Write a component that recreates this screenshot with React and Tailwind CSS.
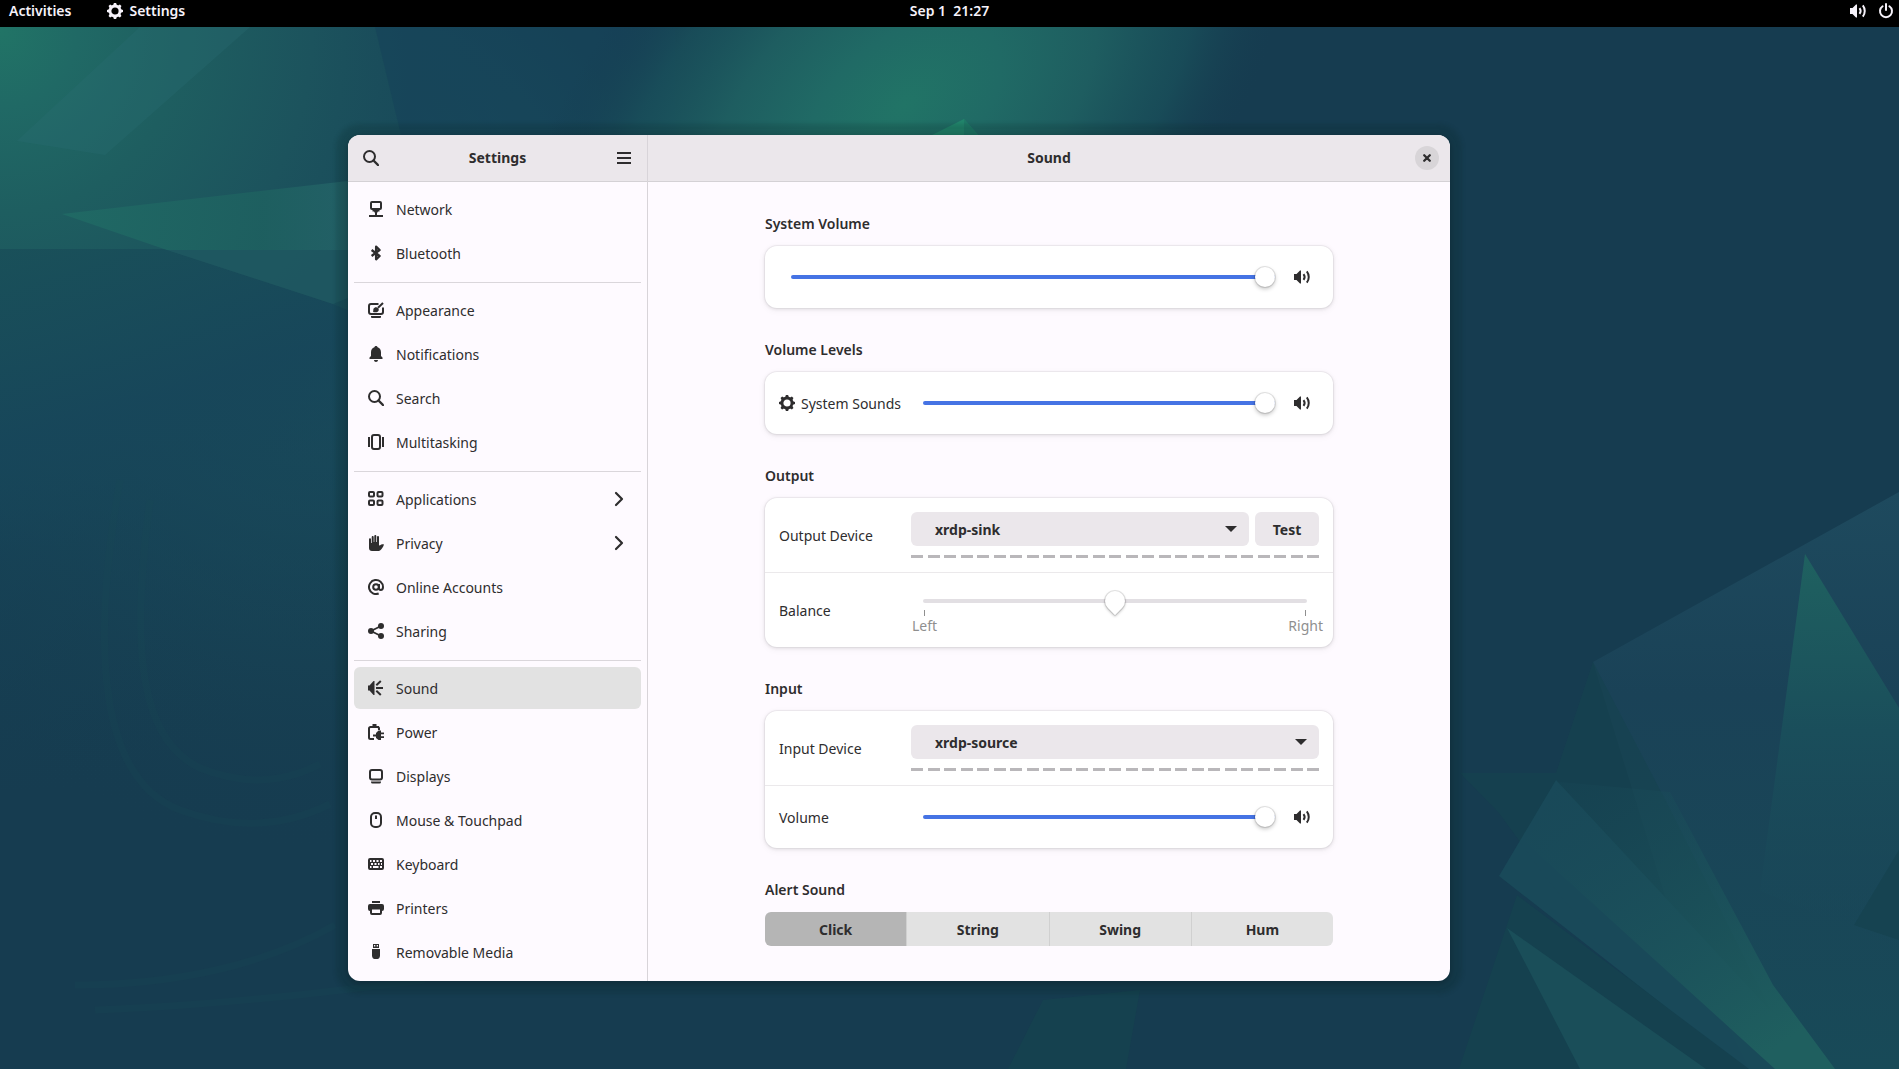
import { useState } from "react";

/* ---------- icons, drawn on a 16px grid ---------- */

function Icon({ children, className = "size-4", label }) {
  return (
    <svg
      viewBox="0 0 16 16"
      className={`shrink-0 ${className}`}
      fill="currentColor"
      role={label ? "img" : undefined}
      aria-label={label}
      aria-hidden={label ? undefined : true}
    >
      {children}
    </svg>
  );
}

const line = { fill: "none", stroke: "currentColor", strokeWidth: 2 };

const SearchIcon = () => (
  <Icon>
    <circle cx="6.5" cy="6.5" r="5.5" {...line} />
    <path d="M10.5 10.5 15 15" {...line} strokeWidth="2.4" strokeLinecap="round" />
  </Icon>
);

const MenuIcon = () => (
  <Icon>
    <path d="M1 2h14v2H1zM1 7h14v2H1zM1 12h14v2H1z" />
  </Icon>
);

const CloseIcon = () => (
  <Icon>
    <path d="m5.200 5.200 5.600 5.600M10.800 5.200l-5.600 5.600" {...line} strokeWidth="2.300" strokeLinecap="round" />
  </Icon>
);

const ChevronIcon = () => (
  <Icon>
    <path d="m5 2 6 6-6 6" {...line} strokeWidth="2.2" strokeLinecap="round" strokeLinejoin="round" />
  </Icon>
);

const GearIcon = () => (
  <Icon>
    <circle cx="8" cy="8" r="5" {...line} strokeWidth="2.800" />
    {[0, 45, 90, 135, 180, 225, 270, 315].map((a) => (
      <path key={a} d="M6 2.800 6.900 0h2.200l.9 2.800z" transform={`rotate(${a} 8 8)`} />
    ))}
  </Icon>
);

const VolumeIcon = () => (
  <Icon>
    <path d="M0 5h2.5L6 1.5h1v13H6L2.500 11H0z" />
    <path d="M9.500 5.200c1.300 1.600 1.300 4 0 5.600" {...line} />
    <path d="M12.800 2.300c2.600 3.300 2.600 8.100 0 11.400" {...line} />
  </Icon>
);

const PowerOffIcon = () => (
  <Icon>
    <path d="M4.600 3.200a6 6 0 1 0 6.800 0" {...line} strokeLinecap="round" />
    <path d="M8 1v6" {...line} strokeLinecap="round" />
  </Icon>
);

const NetworkIcon = () => (
  <Icon>
    <rect x="3" y="1" width="10" height="7" rx="1" {...line} />
    <path d="M4.500 8.500h7v2H10L9 12v2H7v-2l-1-1.500H4.500zM1 14h14v2H1z" />
  </Icon>
);

const BluetoothIcon = () => (
  <Icon>
    <path d="m3.600 5 8 6-3.500 3.300V1.700L11.600 5l-8 6" {...line} strokeWidth="2.300" strokeLinejoin="round" />
  </Icon>
);

const AppearanceIcon = () => (
  <Icon>
    <path d="M10.500 2H3a2 2 0 0 0-2 2v6a2 2 0 0 0 2 2h10a2 2 0 0 0 2-2V5.500" {...line} />
    <path d="M3 14h10v1a1 1 0 0 1-1 1H4a1 1 0 0 1-1-1z" />
    <path d="M5 10c.6-.8 0-2 .5-3.200.8-1.800 3.300-2.200 4.600-.8 1.200 1.400.8 3.300-.8 4-1.200.5-2.700.2-4.300 0z" />
    <path d="m10 5.800 5-4.800" {...line} />
  </Icon>
);

const BellIcon = () => (
  <Icon>
    <path d="M8 0c-.9 0-1.500.6-1.600 1.300C4.300 2 3 3.900 3 6.200V10l-1.500 1.600V13h13v-1.400L13 10V6.200c0-2.300-1.300-4.200-3.400-4.900C9.500.6 8.900 0 8 0zM6 14h4c0 1.100-.9 2-2 2s-2-.9-2-2z" />
  </Icon>
);

const MultitaskingIcon = () => (
  <Icon>
    <rect x="4" y="1" width="8" height="14" rx="2" {...line} />
    <path d="M0 3h2v10H0zM14 3h2v10h-2z" />
  </Icon>
);

const AppsIcon = () => (
  <Icon>
    <g {...line}>
      <rect x="1" y="1" width="5" height="4.500" rx="1" />
      <rect x="9.500" y="1" width="5" height="4.500" rx="1" />
      <rect x="1" y="9.500" width="5" height="4.500" rx="1" />
      <rect x="9.500" y="9.500" width="5" height="4.500" rx="1" />
    </g>
  </Icon>
);

const HandIcon = () => (
  <Icon>
    <path d="M1 4.300C1 2.800 3 2.800 3 4.300V8h.7V2.200c0-1.500 2-1.500 2 0V7h.6V1.100c0-1.500 2-1.500 2 0V7h.7V2.200c0-1.500 2-1.500 2 0v8.300l1.200-.2c1-1.200 2.300-1.500 3.800-.7-.8 2.600-2 4.400-4 5.800-.8.500-1.500.6-2.400.6H4c-1.900 0-3-1.300-3-3z" />
  </Icon>
);

const AtIcon = () => (
  <Icon>
    <circle cx="8" cy="8" r="2.800" {...line} />
    <path d="M11 5v4c0 1.300.8 1.900 1.700 1.900 1.300 0 2.300-1.100 2.300-2.900a7 7 0 1 0-4.300 6.500" {...line} />
  </Icon>
);

const ShareIcon = () => (
  <Icon>
    <circle cx="3" cy="8" r="3" />
    <circle cx="13" cy="3" r="3" />
    <circle cx="13" cy="13" r="3" />
    <path d="M13 3 3 8l10 5" {...line} strokeWidth="1.800" />
  </Icon>
);

const SoundIcon = () => (
  <Icon>
    <path d="M0 5.500h1.500L5.500 1h1v14h-1l-4-4.500H0z" />
    <path d="M8 8h7M8.300 5.300 12.800 1M8.300 10.700l4.500 4.300" {...line} />
  </Icon>
);

const BatteryIcon = () => (
  <Icon>
    <path d="M4.500 0h4v2H11v2H2V2h2.500z" />
    <path d="M11 6V4.500A1.500 1.500 0 0 0 9.500 3h-7A1.500 1.500 0 0 0 1 4.500v9A1.500 1.500 0 0 0 2.500 15H6" {...line} />
    <path d="M13 6.500v2h3v1.800h-3v2h3v1.700h-3v2h-2.500L8 14v-1.500H5v-2h3V9l2.500-2.500z" />
  </Icon>
);

const DisplayIcon = () => (
  <Icon>
    <rect x="2" y="2" width="12" height="9.500" rx="2" {...line} />
    <path d="M3 13.500h10v.5a1.500 1.500 0 0 1-1.500 1.500h-7A1.500 1.500 0 0 1 3 14z" />
  </Icon>
);

const MouseIcon = () => (
  <Icon>
    <rect x="3" y="1" width="10" height="14" rx="4" {...line} />
    <path d="M7 3.500h2V7H7z" />
  </Icon>
);

const KeyboardIcon = () => (
  <Icon>
    <path
      fillRule="evenodd"
      d="M2 2h12a2 2 0 0 1 2 2v8a2 2 0 0 1-2 2H2a2 2 0 0 1-2-2V4a2 2 0 0 1 2-2zM2 4v2h1.500V4zM5 4v2h2V4zM8.500 4v2h2V4zM12 4v2h2V4zM3 7v2h2V7zM6.500 7v2h2V7zM10 7v2h1.500V7zM13 7v2h1V7zM2 10v2h1.500v-2zM5 10v2h5.500v-2zM12 10v2h2v-2z"
    />
  </Icon>
);

const PrinterIcon = () => (
  <Icon>
    <path d="M4 1h8v2H4z" />
    <path
      fillRule="evenodd"
      d="M2 4h12a2 2 0 0 1 2 2v3a2 2 0 0 1-2 2v2a2 2 0 0 1-2 2H4a2 2 0 0 1-2-2v-2a2 2 0 0 1-2-2V6a2 2 0 0 1 2-2zM4 9.500V13h8V9.500z"
    />
  </Icon>
);

const UsbIcon = () => (
  <Icon>
    <path fillRule="evenodd" d="M5 0h6v4H5zM6 1v1.500h1.300V1zM8.700 1v1.500H10V1z" />
    <path d="M4 5h8v6.500C12 14 10.500 15 9.500 15h-3C5.500 15 4 14 4 11.500z" />
  </Icon>
);

/* ---------- wallpaper ---------- */

function Wallpaper() {
  return (
    <svg
      className="absolute inset-0 size-full"
      viewBox="0 0 1899 1069"
      preserveAspectRatio="xMidYMid slice"
      aria-hidden="true"
    >
      <defs>
        <radialGradient id="glowLeft" gradientUnits="userSpaceOnUse" cx="0" cy="30" r="520">
          <stop offset="0" stopColor="#217466" />
          <stop offset="0.150" stopColor="#206965" />
          <stop offset="0.350" stopColor="#1e5e60" />
          <stop offset="0.600" stopColor="#1c535d" />
          <stop offset="0.800" stopColor="#194a5a" stopOpacity="0.800" />
          <stop offset="1" stopColor="#184759" stopOpacity="0" />
        </radialGradient>
        <radialGradient id="glowTop" gradientUnits="userSpaceOnUse" cx="0" cy="0" r="1">
          <stop offset="0" stopColor="#217466" />
          <stop offset="0.250" stopColor="#206a65" />
          <stop offset="0.500" stopColor="#1e5d60" />
          <stop offset="0.750" stopColor="#194f5a" stopOpacity="0.800" />
          <stop offset="1" stopColor="#163c50" stopOpacity="0" />
        </radialGradient>
        <radialGradient id="glowSide" gradientUnits="userSpaceOnUse" cx="330" cy="260" r="600">
          <stop offset="0" stopColor="#1f5a60" />
          <stop offset="0.400" stopColor="#194a5a" />
          <stop offset="1" stopColor="#163c50" stopOpacity="0" />
        </radialGradient>
        <linearGradient id="shade" x1="0" y1="0" x2="0.200" y2="1">
          <stop offset="0" stopColor="#194f59" stopOpacity="0.900" />
          <stop offset="0.350" stopColor="#17465a" stopOpacity="0.900" />
          <stop offset="1" stopColor="#163f52" stopOpacity="0" />
        </linearGradient>
        <linearGradient id="facet" x1="0" y1="0" x2="1" y2="0">
          <stop offset="0" stopColor="#206b65" />
          <stop offset="0.700" stopColor="#1e6160" />
          <stop offset="1" stopColor="#246368" />
        </linearGradient>
        <linearGradient id="spire" x1="0" y1="0" x2="0" y2="1">
          <stop offset="0" stopColor="#1f6160" />
          <stop offset="0.450" stopColor="#1a4e5b" />
          <stop offset="1" stopColor="#194658" stopOpacity="0.300" />
        </linearGradient>
        <linearGradient id="beam" x1="0" y1="0" x2="0.700" y2="1">
          <stop offset="0" stopColor="#184757" stopOpacity="0.200" />
          <stop offset="1" stopColor="#1f5f5f" />
        </linearGradient>
        <linearGradient id="panel" x1="0" y1="0" x2="0" y2="1">
          <stop offset="0" stopColor="#1e4a5e" />
          <stop offset="0.350" stopColor="#1a4257" />
          <stop offset="1" stopColor="#184a58" />
        </linearGradient>
      </defs>
      <rect width="1899" height="1069" fill="#163c50" />
      <rect width="1000" height="900" fill="url(#glowSide)" />
      <rect width="700" height="600" fill="url(#glowLeft)" />
      <path d="M375 27h300v108H401z" fill="#16425a" opacity="0.550" />
      <circle r="1" fill="url(#glowTop)" transform="translate(905 105) rotate(-38) scale(440 270)" />
      <path d="M17 141 140 27h110L105 155z" fill="#2a6c74" opacity="0.300" />
      <path d="M0 249h165l168 55 15 6v480H0z" fill="url(#shade)" />
      <path d="M62 214 348 181v69H167z" fill="url(#facet)" opacity="0.850" />
      <path d="M167 250h181v48l-15 6z" fill="#1f5860" opacity="0.900" />
      <g fill="none" stroke="#1a4a55" strokeWidth="7" opacity="0.220">
        <path d="M120 480c-30 170-20 300 60 330 60 22 110 14 150-6" />
        <path d="M150 500c-20 150-10 240 50 268 50 20 90 12 120-4" />
        <path d="M75 985c100 0 190-20 260-60" />
        <path d="M95 1010c120-4 250-20 330-30" />
      </g>
      <path d="m964 119-36 18h52z" fill="#22866c" />
      <path d="M964 119v18h16z" fill="#1f7a67" />

      <path d="m1593 662 306-170v577h-150l-80-160z" fill="url(#panel)" />
      <path d="m1593 662-37 111h-96l39 40 46 63 155 193h100l-130-260z" fill="#15434f" opacity="0.600" />
      <path d="m1556 780-57 96 246 193h80z" fill="#194a5a" opacity="0.900" />
      <path d="m1670 792-110-10-35 60 250 227h60l-62-84z" fill="url(#beam)" />
      <path d="m1805 554 94 154v240l-139-57z" fill="url(#spire)" />
      <path d="m1899 850-45 75 45 15z" fill="#15414f" opacity="0.700" />
      <path d="m1517 895-58 174h290z" fill="#15414f" />
      <path d="m1507 928 73 141h126z" fill="#1a4e59" />
      <path d="m1043 1000-35 69h118l14-79z" fill="#15454f" opacity="0.600" />
    </svg>
  );
}

/* ---------- shell ---------- */

function TopBar() {
  return (
    <header className="relative grid h-[27px] grid-cols-3 bg-black px-[9px] pb-1.5 text-sm font-semibold text-[#f6f2fa]">
      <nav className="flex items-center gap-9">
        <button type="button">Activities</button>
        <button type="button" className="flex items-center gap-1.5">
          <GearIcon />
          Settings
        </button>
      </nav>
      <button type="button" className="justify-self-center whitespace-pre">
        Sep 1  21:27
      </button>
      <button type="button" aria-label="System menu" className="-mr-1 flex items-center gap-3 justify-self-end">
        <VolumeIcon />
        <PowerOffIcon />
      </button>
    </header>
  );
}

const groups = [
  [
    ["Network", NetworkIcon],
    ["Bluetooth", BluetoothIcon],
  ],
  [
    ["Appearance", AppearanceIcon],
    ["Notifications", BellIcon],
    ["Search", SearchIcon],
    ["Multitasking", MultitaskingIcon],
  ],
  [
    ["Applications", AppsIcon, true],
    ["Privacy", HandIcon, true],
    ["Online Accounts", AtIcon],
    ["Sharing", ShareIcon],
  ],
  [
    ["Sound", SoundIcon],
    ["Power", BatteryIcon],
    ["Displays", DisplayIcon],
    ["Mouse & Touchpad", MouseIcon],
    ["Keyboard", KeyboardIcon],
    ["Printers", PrinterIcon],
    ["Removable Media", UsbIcon],
  ],
];

function Sidebar() {
  const [page, setPage] = useState("Sound");
  return (
    <aside className="flex w-[300px] shrink-0 flex-col border-r border-[#d8d4d9]">
      <div className="flex h-[47px] items-center justify-between border-b border-[#d4d1d5] bg-[#ebe7eb] px-1.5">
        <button type="button" aria-label="Search" className="grid size-[34px] place-items-center">
          <SearchIcon />
        </button>
        <h1 className="font-bold">Settings</h1>
        <button type="button" aria-label="Menu" className="grid size-[34px] place-items-center">
          <MenuIcon />
        </button>
      </div>
      <nav className="flex flex-col px-1.5 pt-[5px] pb-[7px]">
        {groups.map((items, i) => (
          <div key={i} className="flex flex-col">
            {i > 0 && <hr className="mt-[7px] mb-[5px] border-[#dad6db]" />}
            {items.map(([name, Glyph, more]) => (
              <button
                key={name}
                type="button"
                aria-current={page === name ? "page" : undefined}
                onClick={() => setPage(name)}
                className={`my-px flex h-[42px] items-center gap-3 rounded-md px-3.5 text-left ${
                  page === name ? "bg-[#e2e2e2]" : ""
                }`}
              >
                <Glyph />
                <span className="flex-1 pt-0.5">{name}</span>
                {more && <ChevronIcon />}
              </button>
            ))}
          </div>
        ))}
      </nav>
    </aside>
  );
}

const thumb =
  "[&::-webkit-slider-thumb]:size-5 [&::-webkit-slider-thumb]:appearance-none [&::-webkit-slider-thumb]:-mt-2 [&::-webkit-slider-thumb]:bg-white [&::-webkit-slider-thumb]:border-0";
const track =
  "h-5 min-w-0 appearance-none bg-transparent [&::-webkit-slider-runnable-track]:h-1 [&::-webkit-slider-runnable-track]:rounded-full";

function VolumeSlider({ label }) {
  const [value, setValue] = useState(100);
  return (
    <div className="flex flex-1 items-center">
      <input
        type="range"
        aria-label={label}
        value={value}
        onChange={(e) => setValue(+e.target.value)}
        style={{ "--fill": `${value}%` }}
        className={`flex-1 ${track} ${thumb} [&::-webkit-slider-runnable-track]:bg-[linear-gradient(to_right,#4573e4_var(--fill),#e2dfe3_var(--fill))] [&::-webkit-slider-thumb]:rounded-full [&::-webkit-slider-thumb]:shadow-[0_0_0_1px_rgba(0,0,0,0.1),0_2px_4px_rgba(0,0,0,0.25)]`}
      />
      <button type="button" aria-label={`Mute ${label}`} className="mr-[9px] ml-[19px]">
        <VolumeIcon />
      </button>
    </div>
  );
}

function BalanceSlider() {
  const [value, setValue] = useState(50);
  return (
    <div className="flex flex-1 flex-col pt-[18px]">
      <input
        id="balance"
        type="range"
        value={value}
        onChange={(e) => setValue(+e.target.value)}
        className={`mr-[26px] ml-3 ${track} ${thumb} [&::-webkit-slider-runnable-track]:bg-[#e2dfe3] [&::-webkit-slider-thumb]:rotate-45 [&::-webkit-slider-thumb]:rounded-full [&::-webkit-slider-thumb]:rounded-br-[2px] [&::-webkit-slider-thumb]:shadow-[0_0_0_1px_rgba(0,0,0,0.1),1px_1px_3px_rgba(0,0,0,0.25)]`}
      />
      <div className="-mt-px flex justify-between pr-2.5 pl-px text-[#8f8f8f]">
        {["Left", "Right"].map((side) => (
          <span key={side} className="flex flex-col items-center leading-5">
            <i className="h-1.5 w-px bg-[#8f8f8f]" />
            {side}
          </span>
        ))}
      </div>
    </div>
  );
}

function DeviceSelect({ id, name }) {
  return (
    <div className="relative flex-1">
      <select
        id={id}
        defaultValue={name}
        className="h-[34px] w-full appearance-none rounded-md bg-[#ebe7eb] pt-0.5 pr-9 pl-6 font-bold"
      >
        <option>{name}</option>
      </select>
      <svg
        viewBox="0 0 12 6"
        className="pointer-events-none absolute top-3.5 right-3 h-1.5 w-3 fill-current"
        aria-hidden="true"
      >
        <path d="M0 0h12L6 6z" />
      </svg>
    </div>
  );
}

function LevelMeter() {
  return (
    <div className="flex justify-between">
      {Array.from({ length: 25 }, (_, i) => (
        <span key={i} className="h-[3px] w-3 bg-[#b9b7ba]" />
      ))}
    </div>
  );
}

function Section({ title, children }) {
  return (
    <section className="flex flex-col gap-3">
      <h3 className="font-semibold leading-5">{title}</h3>
      {children}
    </section>
  );
}

function Card({ children }) {
  return (
    <div className="divide-y divide-[#ebe9eb] rounded-xl bg-white shadow-[0_0_0_1px_rgba(0,0,0,0.04),0_1px_3px_1px_rgba(0,0,0,0.07),0_2px_6px_2px_rgba(0,0,0,0.03)]">
      {children}
    </div>
  );
}

function DeviceRow({ id, label, name, children }) {
  return (
    <div className="flex h-[75px] items-center px-3.5">
      <label htmlFor={id} className="w-[132px] pt-0.5">
        {label}
      </label>
      <div className="flex flex-1 flex-col gap-[9px]">
        <div className="flex gap-1.5">
          <DeviceSelect id={id} name={name} />
          {children}
        </div>
        <LevelMeter />
      </div>
    </div>
  );
}

function AlertSounds() {
  const [sound, setSound] = useState("Click");
  return (
    <div className="flex overflow-hidden rounded-md">
      {["Click", "String", "Swing", "Hum"].map((name) => (
        <button
          key={name}
          type="button"
          aria-pressed={sound === name}
          onClick={() => setSound(name)}
          className={`h-[34px] flex-1 border-r border-[#d0d0d0] pt-0.5 font-bold last:border-0 ${
            sound === name ? "bg-[#b5b5b5]" : "bg-[#e2e2e2]"
          }`}
        >
          {name}
        </button>
      ))}
    </div>
  );
}

function SoundPage() {
  return (
    <main className="flex min-w-0 flex-1 flex-col">
      <div className="grid h-[47px] grid-cols-[1fr_auto_1fr] items-center border-b border-[#d4d1d5] bg-[#ebe7eb] px-[11px]">
        <h2 className="col-start-2 font-bold">Sound</h2>
        <button
          type="button"
          aria-label="Close"
          className="grid size-6 place-items-center justify-self-end rounded-full bg-[#d8d5d8]"
        >
          <CloseIcon />
        </button>
      </div>
      <div className="mx-auto flex w-full max-w-[568px] flex-col gap-8 pt-8">
        <Section title="System Volume">
          <Card>
            <div className="flex h-[62px] items-center pr-3.5 pl-[26px]">
              <VolumeSlider label="System Volume" />
            </div>
          </Card>
        </Section>
        <Section title="Volume Levels">
          <Card>
            <div className="flex h-[62px] items-center px-3.5">
              <div className="flex w-36 items-center gap-1.5">
                <GearIcon />
                <span className="pt-0.5">System Sounds</span>
              </div>
              <VolumeSlider label="System Sounds" />
            </div>
          </Card>
        </Section>
        <Section title="Output">
          <Card>
            <DeviceRow id="output" label="Output Device" name="xrdp-sink">
              <button type="button" className="w-16 rounded-md bg-[#ebe7eb] pt-0.5 font-bold">
                Test
              </button>
            </DeviceRow>
            <div className="flex h-[74px] pl-3.5">
              <label htmlFor="balance" className="w-[132px] self-center pt-0.5">
                Balance
              </label>
              <BalanceSlider />
            </div>
          </Card>
        </Section>
        <Section title="Input">
          <Card>
            <DeviceRow id="input" label="Input Device" name="xrdp-source" />
            <div className="flex h-[62px] items-center px-3.5">
              <span className="w-36 pt-0.5">Volume</span>
              <VolumeSlider label="Volume" />
            </div>
          </Card>
        </Section>
        <Section title="Alert Sound">
          <AlertSounds />
        </Section>
      </div>
    </main>
  );
}

export default function App() {
  return (
    <div className="relative flex min-h-screen flex-col overflow-hidden font-['Noto_Sans','Open_Sans',sans-serif]">
      <Wallpaper />
      <TopBar />
      <div className="relative mt-[108px] mr-[449px] mb-[88px] ml-[348px] flex overflow-hidden rounded-xl bg-[#fefaff] text-sm text-[#2e2d2e] shadow-[0_2px_6px_1px_rgba(0,0,0,0.2),0_1px_4px_12px_rgba(10,40,40,0.2)]">
        <Sidebar />
        <SoundPage />
      </div>
    </div>
  );
}
